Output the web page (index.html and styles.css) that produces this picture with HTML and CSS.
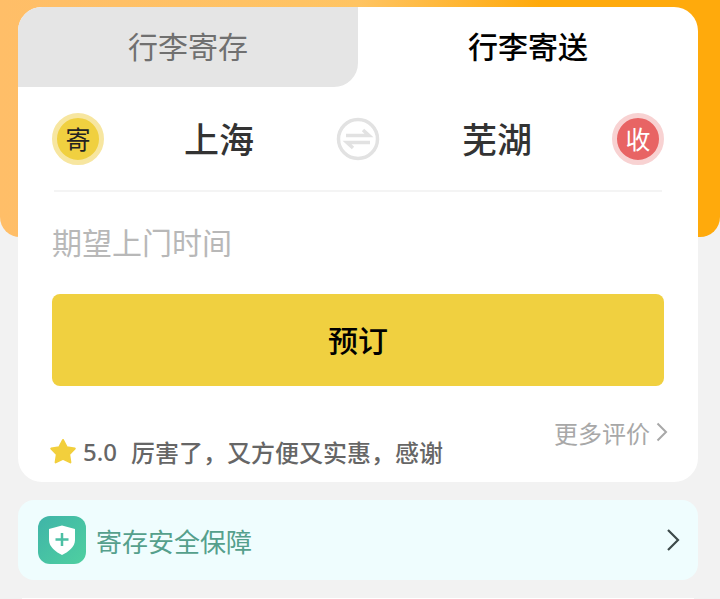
FILE: index.html
```html
<!DOCTYPE html>
<html lang="zh-CN">

<head>
    <meta charset="UTF-8">
    <meta name="viewport" content="width=device-width, initial-scale=1.0">
    <title>行李寄送</title>
    <link rel="stylesheet" href="styles.css">
</head>

<body>
    <div class="header-bg"></div>

    <div class="card">
        <!-- Tabs -->
        <div class="tabs">
            <div class="tab tab-off">行李寄存</div>
            <div class="tab tab-on">行李寄送</div>
        </div>

        <!-- Route -->
        <div class="route">
            <span class="dot dot-send">寄</span>
            <span class="city">上海</span>
            <svg class="swap" width="44" height="44" viewBox="0 0 44 44" fill="none" stroke="#e2e2e2" stroke-width="3.500">
                <circle cx="22" cy="22" r="19.500"></circle>
                <path d="M10 18.500H33L27 13"></path>
                <path d="M34 25.500H11L17 31"></path>
            </svg>
            <span class="city">芜湖</span>
            <span class="dot dot-recv">收</span>
        </div>

        <div class="time">期望上门时间</div>

        <button class="book">预订</button>

        <!-- Review -->
        <div class="review">
            <div class="review-text">
                <svg class="star" width="28" height="26" viewBox="0 0 28 26">
                    <path d="M14 2L17.800 9.200L25.800 10.600L20.200 16.400L21.400 24.400L14 20.800L6.600 24.400L7.800 16.400L2.200 10.600L10.200 9.200Z" fill="#f2cf3c" stroke="#f2cf3c" stroke-width="2" stroke-linejoin="round"></path>
                </svg>
                <span class="score">5.0</span>
                <span class="comment">厉害了，又方便又实惠，感谢</span>
            </div>
            <div class="more">更多评价
                <svg width="12" height="20" viewBox="0 0 12 20" fill="none" stroke="#a8a8a8" stroke-width="2">
                    <path d="M1.500 1.500L10 10L1.500 18.500"></path>
                </svg>
            </div>
        </div>
    </div>

    <!-- Safety banner -->
    <div class="safety">
        <span class="shield">
            <svg width="28" height="30" viewBox="0 0 28 30">
                <path d="M14 0.500L27 4V15C27 22 20 27 14 30C8 27 1 22 1 15V4Z" fill="#fff"></path>
                <path d="M14 8V21M7.500 14.500H20.500" fill="none" stroke="#4cbfa4" stroke-width="2.500"></path>
            </svg>
        </span>
        <span class="safety-text">寄存安全保障</span>
        <svg class="safety-arrow" width="14" height="24" viewBox="0 0 14 24" fill="none" stroke="#3d4a4a" stroke-width="2.200">
            <path d="M2 2L12 12L2 22"></path>
        </svg>
    </div>

    <div class="next-card"></div>
</body>

</html>
```

FILE: styles.css
```css
* {
    box-sizing: border-box;
}

body {
    margin: 0;
    padding: 7px 22px 0 18px;
    height: 599px;
    overflow: hidden;
    background-color: #f2f2f2;
    font-family: "Noto Sans CJK SC", "Liberation Sans", sans-serif;
}

.header-bg {
    position: absolute;
    top: 0;
    left: 0;
    width: 720px;
    height: 237px;
    border-radius: 0 0 20px 20px;
    background: linear-gradient(90deg, #ffbe68, #ffc462 50%, #ffaa0c 75%);
}

.card {
    position: relative;
    height: 475px;
    border-radius: 24px;
    background-color: #fff;
    overflow: hidden;
}

.tabs {
    display: flex;
    height: 80px;
}

.tab {
    width: 340px;
    font-size: 30px;
    line-height: 76px;
    text-align: center;
}

.tab-off {
    background-color: #e5e5e5;
    color: #707070;
    border-bottom-right-radius: 24px;
}

.tab-on {
    color: #000;
    font-weight: 500;
}

.route {
    display: flex;
    align-items: center;
    height: 105px;
    margin: 0 36px;
    border-bottom: 2px solid #f4f4f4;
}

.dot {
    flex: none;
    width: 52px;
    height: 52px;
    margin: 0 -2px;
    border-radius: 50%;
    font-size: 25px;
    line-height: 41px;
    text-align: center;
}

.dot-send {
    border: 5px solid #f7e6a0;
    background-color: #f0d040;
    color: #222;
}

.dot-recv {
    border: 5px solid #f8d2d2;
    background-color: #e86464;
    color: #fff;
}

.city {
    flex: 1;
    padding-bottom: 2px;
    font-size: 35px;
    font-weight: 500;
    color: #333;
    text-align: center;
}

.swap {
    flex: none;
}

.time {
    margin: 0 34px;
    height: 102px;
    font-size: 30px;
    line-height: 98px;
    color: #b8b8b8;
}

.book {
    display: block;
    width: 612px;
    height: 92px;
    margin-left: 34px;
    padding-bottom: 4px;
    border: none;
    border-radius: 8px;
    background-color: #f0d040;
    color: #000;
    font-family: inherit;
    font-size: 30px;
    font-weight: 500;
}

.review {
    display: flex;
    justify-content: space-between;
    margin: 30px 30px 0 30px;
}

.review-text {
    display: flex;
    align-items: center;
    height: 42px;
    margin-top: 14px;
    color: #666;
    font-size: 24px;
    font-weight: 500;
}

.star {
    margin-left: 1px;
}

.score {
    margin-left: 6px;
    font-family: "Noto Sans", sans-serif;
}

.comment {
    margin-left: 14px;
}

.more {
    display: flex;
    align-items: center;
    gap: 6px;
    height: 32px;
    color: #a8a8a8;
    font-size: 24px;
}

.safety {
    display: flex;
    align-items: center;
    height: 80px;
    margin-top: 18px;
    padding: 0 18px 0 20px;
    border-radius: 16px;
    background-color: #effdfe;
}

.shield {
    display: flex;
    align-items: center;
    justify-content: center;
    width: 48px;
    height: 48px;
    border-radius: 12px;
    background: linear-gradient(135deg, #3fb4a8, #4fd0a0);
}

.safety-text {
    flex: 1;
    margin-left: 10px;
    color: #55a08c;
    font-size: 26px;
}

.next-card {
    height: 1px;
    margin: 18px 4px 0;
    background-color: #fff;
}
```
